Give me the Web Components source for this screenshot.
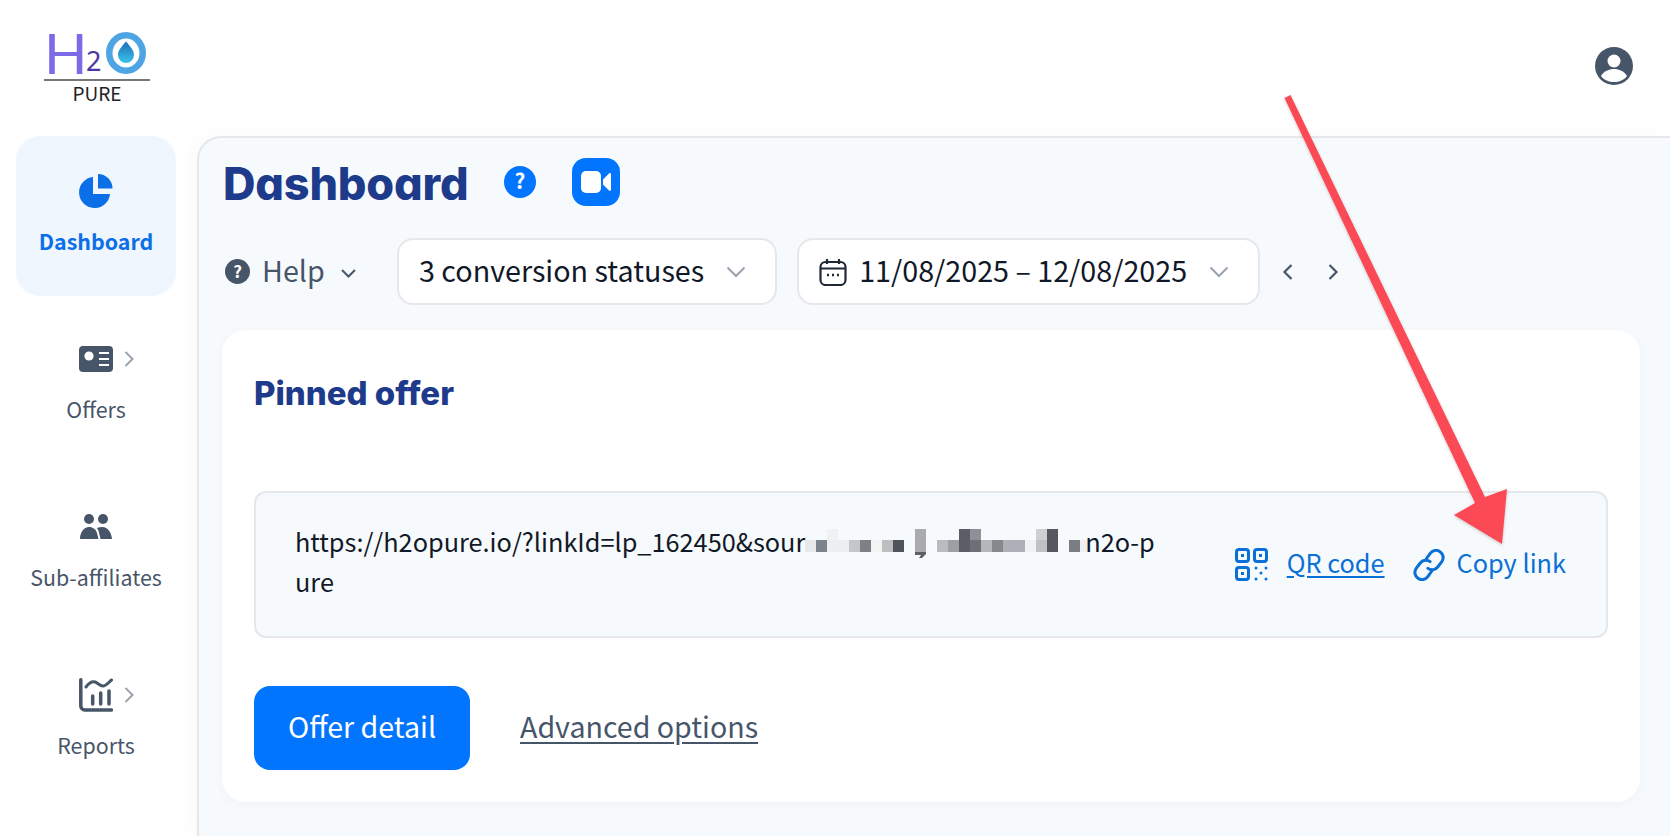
<!DOCTYPE html>
<html>
<head>
<meta charset="utf-8">
<style>
  html, body { margin: 0; height: 100%; overflow: hidden; background: #fff; }
  body { font-family: "Noto Sans CJK SC", "Noto Sans", sans-serif; color: #111827; }
</style>
</head>
<body>
<app-shell>
  <h2o-logo slot="logo"></h2o-logo>
  <svg slot="avatar" width="38" height="38" viewBox="0 0 38 38">
    <circle cx="19" cy="19" r="19" fill="#475569"/>
    <circle cx="19" cy="14" r="6.5" fill="#fff"/>
    <path d="M6 29c3-5 8-7 13-7s10 2 13 7c-3 4-8 6-13 6s-10-2-13-6z" fill="#fff"/>
  </svg>

  <side-item slot="nav" active label="Dashboard">
    <svg width="34" height="34" viewBox="0 0 34 34" fill="#0b6fe8">
      <path d="M14 3.100V20H31A15.500 15.500 0 1 1 14 3.100Z"/>
      <path d="M19 0A14.500 14.500 0 0 1 33.500 14.500H19Z"/>
    </svg>
  </side-item>
  <side-item slot="nav" arrow label="Offers">
    <svg width="34" height="26" viewBox="0 0 34 26">
      <rect width="34" height="26" rx="4" fill="#475569"/>
      <circle cx="10" cy="10" r="4.600" fill="#fff"/>
      <path d="M20 7h10M20 13h10M20 19h10" stroke="#fff" stroke-width="2"/>
    </svg>
  </side-item>
  <side-item slot="nav" label="Sub-affiliates">
    <svg width="32" height="26" viewBox="0 0 32 26" fill="#475569">
      <circle cx="9" cy="5" r="5"/>
      <circle cx="23" cy="5" r="5"/>
      <path d="M0 25c0-7 4-12 9-12 4 0 7 2.500 8 6l1.500 6z"/>
      <path d="M20.500 25l-1.800-7.500c-.5-1.600-1-2.700-2-3.500 1.800-.7 3.800-1 5.800-1 5 0 9 5 9.500 12z"/>
    </svg>
  </side-item>
  <side-item slot="nav" arrow label="Reports">
    <svg width="34" height="34" viewBox="0 0 34 34" fill="none" stroke="#475569" stroke-width="3.500" stroke-linecap="round" stroke-linejoin="round">
      <path d="M1.800 1.800V28a4 4 0 0 0 4 4H32.500"/>
      <path d="M7 9C10 5 13 3 16 4S21 8 24 8 30 4 32.500 2" stroke-width="3"/>
      <path d="M13.700 18v8M21.700 15v11M30 13v13"/>
    </svg>
  </side-item>

  <dash-panel slot="main"></dash-panel>

  <svg slot="overlay" width="1670" height="836" viewBox="0 0 1670 836">
    <defs><filter id="s" x="-10%" y="-10%" width="120%" height="120%"><feDropShadow dx="0" dy="1" stdDeviation="1.500" flood-color="#000" flood-opacity=".22"/></filter></defs>
    <path d="M1284.500 98 L1290.500 95 L1485 497 L1507 489 L1502 544 L1454 515 L1475 503 Z" fill="#fb4a55" filter="url(#s)"/>
  </svg>
</app-shell>

<script>
class AppShell extends HTMLElement {
  constructor() {
    super();
    this.attachShadow({ mode: 'open' });
    this.shadowRoot.innerHTML = `
      <style>
        :host { display: block; width: 1670px; height: 836px; position: relative; overflow: hidden; }
        .top { height: 136px; display: flex; justify-content: space-between; box-sizing: border-box; padding: 30px 37px 0 44px; }
        .avatar { padding-top: 17px; }
        .body { display: flex; height: 700px; }
        nav { width: 197px; flex: none; box-sizing: border-box; padding: 0 21px 0 16px; display: flex; flex-direction: column; gap: 8px; }
        .main { flex: 1; min-width: 0; display: flex; }
        .overlay { position: absolute; left: 0; top: 0; pointer-events: none; }
      </style>
      <div class="top">
        <slot name="logo"></slot>
        <div class="avatar"><slot name="avatar"></slot></div>
      </div>
      <div class="body">
        <nav><slot name="nav"></slot></nav>
        <div class="main"><slot name="main"></slot></div>
      </div>
      <div class="overlay"><slot name="overlay"></slot></div>
    `;
  }
}

class H2oLogo extends HTMLElement {
  constructor() {
    super();
    this.attachShadow({ mode: 'open' });
    this.shadowRoot.innerHTML = `
      <style>
        :host { display: block; width: 106px; }
        .mark { display: flex; align-items: flex-end; height: 44px; }
        .h { font: 400 57px/44px Lato, sans-serif; color: #7b6be6; height: 44px; width: 42px; }
        .two { font: 400 27px/26px "Noto Sans", sans-serif; color: #4b37a3; width: 20px; }
        .rule { height: 2px; background: #777; margin-top: 5px; }
        .name { font: 400 19px/23px "Noto Sans CJK SC", sans-serif; color: #222; text-align: center; }
      </style>
      <div class="mark">
        <span class="h">H</span><span class="two">2</span>
        <svg width="40" height="44" viewBox="0 0 40 44">
          <defs><linearGradient id="d" x1="0" y1="0" x2="0" y2="1"><stop offset="0" stop-color="#1b6fb8"/><stop offset="1" stop-color="#3cc3ea"/></linearGradient></defs>
          <ellipse cx="20" cy="23" rx="16.750" ry="17.750" fill="none" stroke="#4fa5e3" stroke-width="6.500"/>
          <path d="M20 11.500c5 6 8 9 8 13.500a8 8 0 0 1-16 0c0-4.500 3-7.500 8-13.500z" fill="url(#d)"/>
        </svg>
      </div>
      <div class="rule"></div>
      <div class="name">PURE</div>
    `;
  }
}

class SideItem extends HTMLElement {
  constructor() {
    super();
    this.attachShadow({ mode: 'open' });
    const label = this.getAttribute('label');
    const arrow = this.hasAttribute('arrow');
    this.shadowRoot.innerHTML = `
      <style>
        :host { display: flex; flex-direction: column; align-items: center; height: 160px; box-sizing: border-box; border-radius: 24px; color: #475569; }
        :host([active]) { background: #eff6fe; color: #0b6fe8; font-weight: 700; }
        .icon { height: 34px; margin-top: 38px; display: flex; align-items: center; position: relative; }
        .arrow { position: absolute; left: 100%; top: 50%; margin: -9px 0 0 11px; }
        .label { margin-top: 17px; font-size: 21.400px; line-height: 32px; white-space: nowrap; }
      </style>
      <div class="icon"><slot></slot>
        ${arrow ? '<svg class="arrow" width="11" height="18" viewBox="0 0 11 18" fill="none" stroke="#9ca3af" stroke-width="2"><path d="M1.500 2l7 7-7 7"/></svg>' : ''}
      </div>
      <div class="label">${label}</div>
    `;
  }
}

class SelectBox extends HTMLElement {
  constructor() {
    super();
    this.attachShadow({ mode: 'open' });
    this.shadowRoot.innerHTML = `
      <style>
        :host { display: flex; align-items: center; height: 67px; box-sizing: border-box; background: #fff; border: 2px solid #e5e7eb; border-radius: 16px; padding: 0 29px 0 20px; font-size: 28.700px; color: #111827; white-space: nowrap; }
        ::slotted(svg) { margin-right: 12px; }
        .t { margin-bottom: 5px; }
        .chev { margin-left: 22px; }
      </style>
      <slot name="icon"></slot><span class="t"><slot></slot></span>
      <svg class="chev" width="20" height="12" viewBox="0 0 20 12" fill="none" stroke="#9ca3af" stroke-width="2"><path d="M1.500 1.500L10 10l8.500-8.500"/></svg>
    `;
  }
}

class LinkAction extends HTMLElement {
  constructor() {
    super();
    this.attachShadow({ mode: 'open' });
    this.shadowRoot.innerHTML = `
      <style>
        :host { display: flex; align-items: center; gap: 19px; color: #0a6fd6; font-size: 25.300px; white-space: nowrap; }
        .t { margin-bottom: 6px; }
        :host([under]) .t { text-decoration: underline; text-underline-offset: 3px; }
        :host(:not([under])) { gap: 12px; }
      </style>
      <slot name="icon"></slot><span class="t"><slot></slot></span>
    `;
  }
}

class PinnedOffer extends HTMLElement {
  constructor() {
    super();
    this.attachShadow({ mode: 'open' });
    // pixel cells over the redacted part of the link
    const cells = [
      [0,1,'#e6e8ea'],[1,1,'#7d838b'],[2,0,'#f0f1f3'],[2,1,'#eceef0'],[3,1,'#eceef0'],[4,1,'#c3c6ca'],[5,1,'#7d8186'],[6,1,'#f2f3f4'],[7,1,'#bcbfbd'],[8,1,'#4f545b'],
      [10,0,'#ababae'],[10,1,'#ababae'],[12,1,'#b8bbc0'],[13,1,'#9da0a3'],[14,0,'#5b5e66'],[14,1,'#5b5e66'],[15,0,'#8d9096'],[15,1,'#6c6f76'],[16,1,'#b3b6ba'],[17,1,'#85888d'],[18,1,'#adb0b6'],[19,1,'#adb0b6'],
      [20,1,'#f0f2f3'],[21,0,'#cdd0d3'],[21,1,'#bfc2c4'],[22,0,'#55585f'],[22,1,'#55585f'],[24,1,'#7a7d83'],[25,1,'#eef0f4']
    ].map(c => `<rect x="${c[0] * 11}" y="${c[1] * 11}" width="11" height="${c[1] ? 12 : 11}" fill="${c[2]}"/>`).join('');
    this.shadowRoot.innerHTML = `
      <style>
        :host { display: block; background: #fff; border-radius: 24px; box-sizing: border-box; height: 472px; padding: 0 32px; box-shadow: 0 2px 12px rgba(15,23,42,.03); }
        h2 { margin: 0; padding-top: 38px; font: 800 33px/50px Inter, sans-serif; font-feature-settings: "cv11"; color: #1e3a8a; }
        .box { margin-top: 73px; height: 147px; box-sizing: border-box; border: 2px solid #e5e7eb; border-radius: 12px; background: #f7fafc; display: flex; align-items: center; padding: 0 40px 0 39px; }
        .url { font-size: 25.300px; line-height: 39.500px; white-space: nowrap; margin-bottom: 6px; color: #111827; }
        .url svg { vertical-align: -6px; margin-right: -10px; }
        .acts { margin-left: auto; display: flex; gap: 28px; }
        .foot { margin-top: 48px; display: flex; align-items: center; gap: 50px; }
        .btn { width: 216px; height: 84px; padding-bottom: 5px; box-sizing: border-box; border-radius: 16px; background: #0275fe; color: #fff; font-size: 28.600px; display: flex; align-items: center; justify-content: center; }
        .adv { font-size: 28.600px; margin-bottom: 6px; color: #475569; text-decoration: underline; text-underline-offset: 4px; }
      </style>
      <h2>Pinned offer</h2>
      <div class="box">
        <div class="url">https://h2opure.io/?linkId=lp_162450&amp;sour<svg width="290" height="29" viewBox="0 0 290 29">${cells}<path d="M110 23h11v2l-4 4h-3l2-3h-6z" fill="#5c5f66"/></svg>n2o-p<br>ure</div>
        <div class="acts">
          <link-action under>
            <svg slot="icon" width="33" height="33" viewBox="0 0 33 33" fill="none" stroke="#0a6fd6" stroke-width="3">
              <rect x="1.500" y="1.500" width="12" height="12" rx="2.500"/><rect x="19.500" y="1.500" width="12" height="12" rx="2.500"/><rect x="1.500" y="19.500" width="12" height="12" rx="2.500"/>
              <g fill="#0a6fd6" stroke="none"><rect x="6" y="6" width="3" height="3"/><rect x="24" y="6" width="3" height="3"/><rect x="6" y="24" width="3" height="3"/>
              <circle cx="21" cy="20" r="1.500"/><circle cx="31" cy="20" r="1.500"/><circle cx="26" cy="25" r="1.500"/><circle cx="21" cy="31" r="1.500"/><circle cx="31" cy="31" r="1.500"/></g>
            </svg>
            QR code
          </link-action>
          <link-action>
            <svg slot="icon" width="32" height="32" viewBox="0 0 32 32" fill="none" stroke="#0a6fd6" stroke-width="3" stroke-linecap="round">
              <path d="M13.500 9.500l3.700-5.200a7 7 0 0 1 9.800-1.600 7 7 0 0 1 2 9.600l-4.300 5.700a7 7 0 0 1-9.800 1.400"/>
              <path d="M18.500 22.500l-3.700 5.200a7 7 0 0 1-9.800 1.600 7 7 0 0 1-2-9.600l4.300-5.700a7 7 0 0 1 9.800-1.400"/>
            </svg>
            Copy link
          </link-action>
        </div>
      </div>
      <div class="foot">
        <div class="btn">Offer detail</div>
        <div class="adv">Advanced options</div>
      </div>
    `;
  }
}

class DashPanel extends HTMLElement {
  constructor() {
    super();
    this.attachShadow({ mode: 'open' });
    this.shadowRoot.innerHTML = `
      <style>
        :host { display: block; flex: 1; box-sizing: border-box; background: #f7fafc; border: 2px solid #e5e7eb; border-width: 2px 0 0 2px; border-top-left-radius: 24px; padding: 0 30px 0 23px; box-shadow: -6px 0 18px rgba(15,23,42,.025); }
        .head { display: flex; align-items: center; height: 84px; padding-top: 4px; box-sizing: border-box; }
        h1 { margin: 4px 0 0; padding-left: 1px; font: 800 45px/60px Inter, sans-serif; font-feature-settings: "cv11"; letter-spacing: -.2px; color: #1e3a8a; }
        .q { margin-left: 36px; }
        .cam { margin-left: 36px; width: 48px; height: 48px; border-radius: 14px; background: #0275fe; display: flex; align-items: center; justify-content: center; }
        .filters { display: flex; align-items: center; margin-top: 16px; height: 67px; }
        .help { display: flex; align-items: center; color: #475569; font-size: 28.700px; width: 175px; padding-left: 3px; box-sizing: border-box; }
        .help .t { margin: 0 16px 5px 12px; }
        .help .dn { margin-top: 3px; }
        .date { margin-left: 20px; }
        .pg { margin-left: 22px; display: flex; gap: 35px; }
        pinned-offer { margin-top: 25px; }
      </style>
      <div class="head">
        <h1>Dashboard</h1>
        <svg class="q" width="32" height="32" viewBox="0 0 32 32"><circle cx="16" cy="16" r="16" fill="#0275fe"/><text x="16" y="23" text-anchor="middle" font-family="Noto Sans CJK SC" font-weight="700" font-size="21" fill="#fff">?</text></svg>
        <div class="cam"><svg width="30" height="22" viewBox="0 0 30 22" fill="#fff"><rect width="20" height="22" rx="5"/><path d="M22 8.500l6-6c.8-.8 2-.3 2 .8v15.400c0 1.100-1.200 1.600-2 .8l-6-6z"/></svg></div>
      </div>
      <div class="filters">
        <div class="help">
          <svg width="25" height="25" viewBox="0 0 25 25"><circle cx="12.500" cy="12.500" r="12.500" fill="#475569"/><text x="12.500" y="19" text-anchor="middle" font-family="Noto Sans CJK SC" font-weight="700" font-size="17" fill="#fff">?</text></svg>
          <span class="t">Help</span>
          <svg class="dn" width="15" height="9" viewBox="0 0 15 9" fill="none" stroke="#475569" stroke-width="2"><path d="M1 1l6.500 6.500L14 1"/></svg>
        </div>
        <select-box>3 conversion statuses</select-box>
        <select-box class="date">
          <svg slot="icon" width="28" height="28" viewBox="0 0 28 28" fill="none" stroke="#1f2937" stroke-width="2.200"><rect x="1.500" y="4" width="25" height="23" rx="5"/><path d="M1.500 10.500h25M8 1v5M20 1v5"/><path d="M8 17h2M13 17h2M18 17h2" stroke-width="2.600"/></svg>
          11/08/2025 – 12/08/2025
        </select-box>
        <div class="pg">
          <svg width="11" height="18" viewBox="0 0 11 18" fill="none" stroke="#475569" stroke-width="2.200"><path d="M9.500 2l-7 7 7 7"/></svg>
          <svg width="11" height="18" viewBox="0 0 11 18" fill="none" stroke="#475569" stroke-width="2.200"><path d="M1.500 2l7 7-7 7"/></svg>
        </div>
      </div>
      <pinned-offer></pinned-offer>
    `;
  }
}

customElements.define('app-shell', AppShell);
customElements.define('h2o-logo', H2oLogo);
customElements.define('side-item', SideItem);
customElements.define('select-box', SelectBox);
customElements.define('link-action', LinkAction);
customElements.define('pinned-offer', PinnedOffer);
customElements.define('dash-panel', DashPanel);
</script>
</body>
</html>
